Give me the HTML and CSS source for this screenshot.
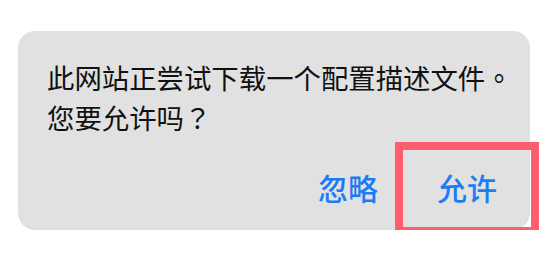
FILE: index.html
```html
<!DOCTYPE html>
<html lang="zh-CN">
<head>
<meta charset="utf-8">
<link rel="stylesheet" href="styles.css">
</head>
<body>
<div class="alert">
  <p class="message">此网站正尝试下载一个配置描述文件<span class="punct" lang="zh-TW">。</span><br>您要允许吗<span class="punct" lang="zh-TW">？</span></p>
  <div class="actions">
    <span class="btn">忽略</span>
    <span class="btn primary">允许<span class="highlight"></span></span>
  </div>
</div>
</body>
</html>
```
FILE: styles.css
```css
html, body {
  margin: 0;
  padding: 0;
  background: #ffffff;
}
body {
  font-family: "Noto Sans CJK SC", "Noto Sans", sans-serif;
}
.alert {
  position: relative;
  box-sizing: border-box;
  margin: 31px 0 0 18px;
  width: 512px;
  height: 199px;
  background: #e1e1e1;
  border-radius: 17px;
  padding: 26px 0 0 29px;
}
.message {
  margin: 0;
  font-size: 27.4px;
  line-height: 40px;
  color: #111111;
  white-space: nowrap;
}
.punct {
  font-family: "Noto Sans CJK TC", "Noto Sans CJK SC", sans-serif;
  font-feature-settings: "locl" 1;
}
.actions {
  display: flex;
  justify-content: flex-end;
  gap: 59px;
  padding-right: 33px;
  margin-top: 30px;
}
.btn {
  position: relative;
  font-size: 30px;
  line-height: 40px;
  font-weight: 500;
  color: #1b7cf4;
}
.highlight {
  position: absolute;
  left: -42px;
  right: -42px;
  top: -25px;
  bottom: -28px;
  border: 8px solid #fd5e6d;
}
```
